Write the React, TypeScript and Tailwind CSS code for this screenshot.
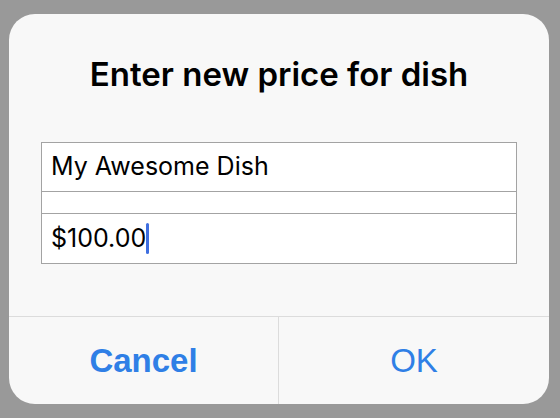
export default function App() {
  return (
    <div className="w-[560px] h-[418px] bg-[#999999] pl-[9px] pt-[14px]" style={{ fontFamily: 'Inter, "Liberation Sans", sans-serif' }}>
      <div className="w-[540px] h-[390px] bg-[#f8f8f8] rounded-[26px] overflow-hidden flex flex-col">
        {/* Title */}
        <div className="h-[128px] flex items-start justify-center pt-[40px]">
          <h1 className="text-[33px] leading-[40px] font-semibold text-black">Enter new price for dish</h1>
        </div>

        {/* Fields */}
        <div className="mx-[32px] flex flex-col">
          <div className="h-[50px] bg-white border border-[#a3a3a3] flex items-center px-[9px]">
            <span className="text-[25px] text-black">My Awesome Dish</span>
          </div>
          <div className="h-[23px] bg-white border border-[#a3a3a3] -mt-px" />
          <div className="h-[51px] bg-white border border-[#a3a3a3] -mt-px flex items-center px-[9px]">
            <span className="text-[25px] text-black">$100.00</span>
            <span className="w-[3px] h-[31px] bg-[#3f6fe0] rounded-sm" />
          </div>
        </div>

        {/* Buttons */}
        <div className="mt-auto h-[88px] border-t border-[#dcdcdc] flex" style={{ fontFamily: '"Liberation Sans", Arial, sans-serif' }}>
          <button className="w-[270px] border-r border-[#dcdcdc] flex items-center justify-center text-[33px] font-bold text-[#2f7fe6]">
            Cancel
          </button>
          <button className="flex-1 flex items-center justify-center text-[33px] text-[#2f7fe6]">
            OK
          </button>
        </div>
      </div>
    </div>
  )
}
